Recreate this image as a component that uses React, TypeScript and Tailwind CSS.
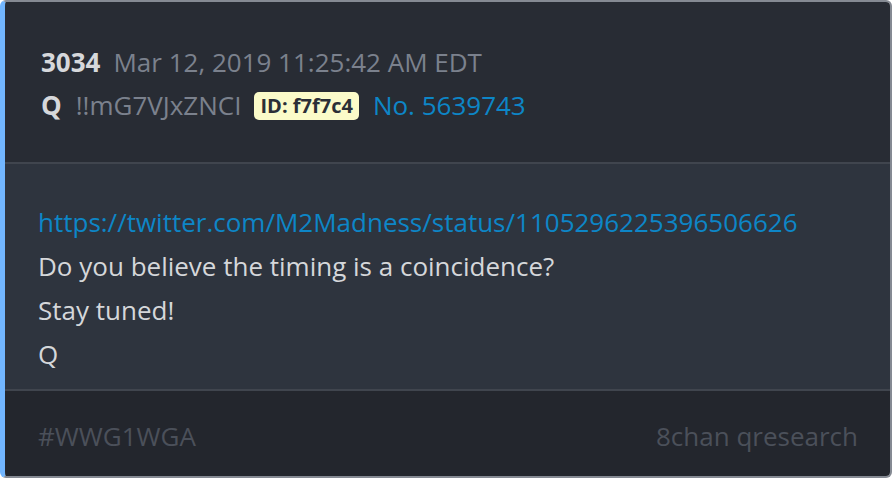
export default function App() {
  return (
    <div className="w-[894px] h-[478px] bg-white" style={{ fontFamily: '"Open Sans", "Noto Sans", sans-serif' }}>
      <div className="w-[892px] h-[478px] flex flex-col overflow-hidden rounded-[6px] border-2 border-[#858a93] border-l-[5px] border-l-[#72b6ff]">
        <div className="bg-[#282c34] pl-[36px] pt-[39px] h-[160px] shrink-0 text-[26px] leading-[43px]">
          <div className="flex items-center gap-[13px]">
            <span className="font-bold text-[#d6d8db]">3034</span>
            <span className="text-[#7b818d]">Mar 12, 2019 11:25:42 AM EDT</span>
          </div>
          <div className="flex items-center gap-[14px]">
            <span className="font-bold text-[#d6d8db]">Q</span>
            <span className="text-[#7b818d] mr-[-1px]">!!mG7VJxZNCI</span>
            <span className="bg-[#fbfbc9] text-[#2b2f37] font-bold text-[20px] leading-[28px] px-[6px] rounded-[5px]">ID: f7f7c4</span>
            <span className="text-[#0d86c7]">No. 5639743</span>
          </div>
        </div>
        <div className="h-[2px] bg-[#40454e] shrink-0" />
        <div className="bg-[#2e343e] pl-[33px] pt-[36px] h-[225px] shrink-0 text-[26px] leading-[44px] text-[#d5d7da]">
          <div className="text-[#0d86c7]">https://twitter.com/M2Madness/status/1105296225396506626</div>
          <div>Do you believe the timing is a coincidence?</div>
          <div>Stay tuned!</div>
          <div>Q</div>
        </div>
        <div className="h-[2px] bg-[#40454e] shrink-0" />
        <div className="bg-[#23262d] flex-1 flex items-center justify-between pl-[33px] pr-[32px] pt-[6px] text-[26px] text-[#4b505a]">
          <span>#WWG1WGA</span>
          <span>8chan qresearch</span>
        </div>
      </div>
    </div>
  );
}
